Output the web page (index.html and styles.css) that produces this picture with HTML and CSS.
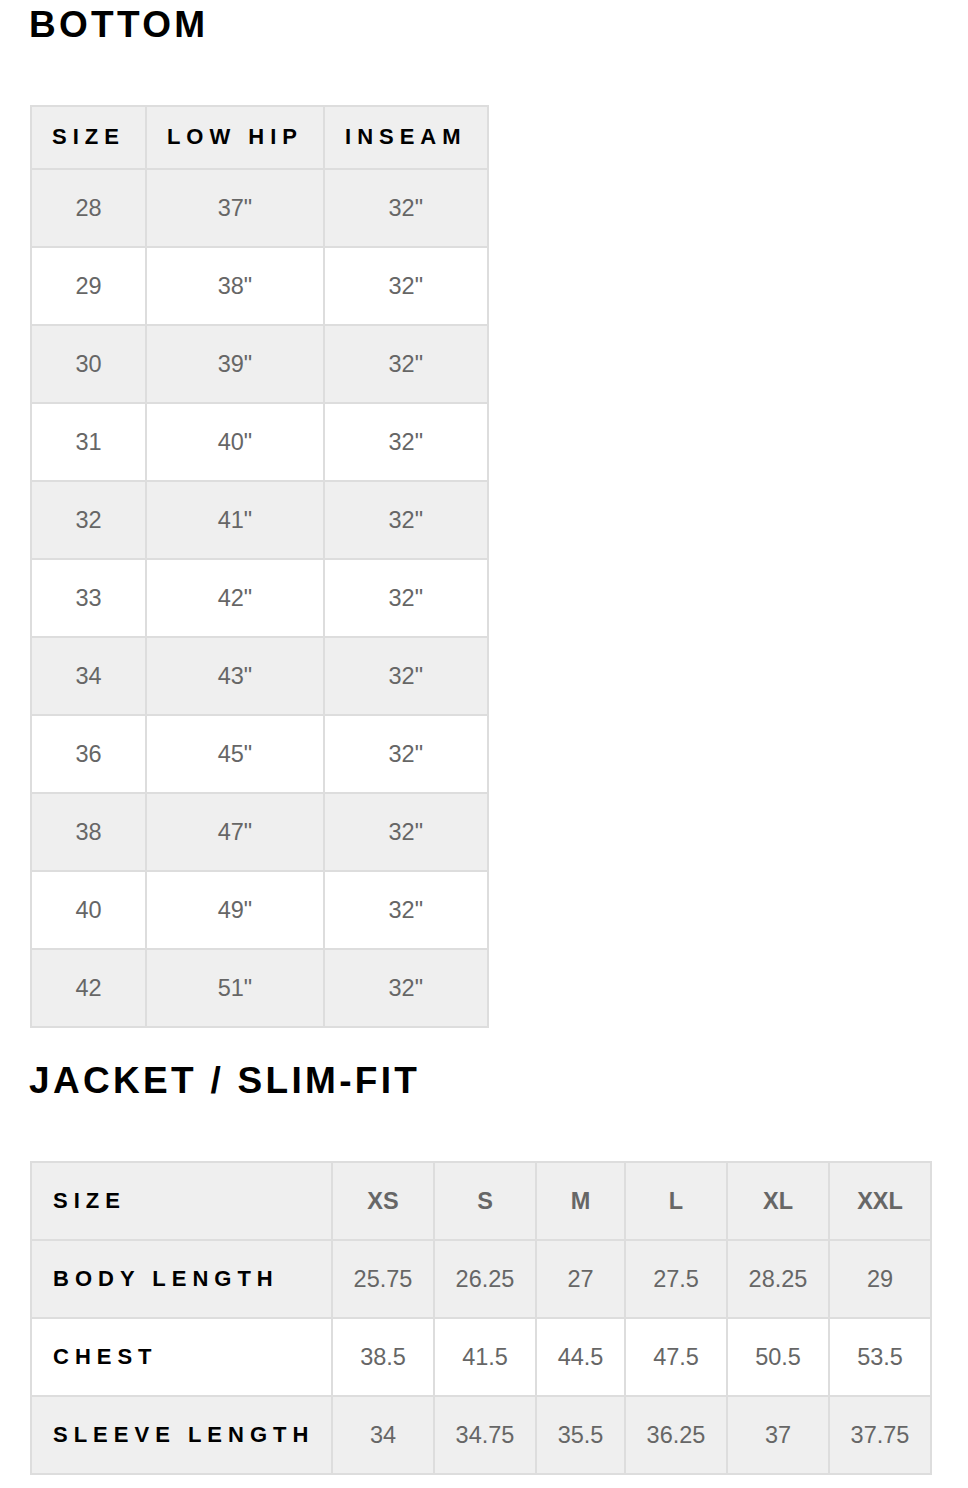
FILE: index.html
```html
<!DOCTYPE html>
<html lang="en">
<head>
<meta charset="utf-8">
<title>Size Chart</title>
<link rel="stylesheet" href="styles.css">
</head>
<body>
<main class="page">
  <section class="chart">
    <h2 class="chart-title">BOTTOM</h2>
    <table class="size-table bottom-table">
      <thead>
        <tr class="head-row"><th>SIZE</th><th>LOW HIP</th><th>INSEAM</th></tr>
      </thead>
      <tbody>
        <tr><td>28</td><td>37"</td><td>32"</td></tr>
        <tr><td>29</td><td>38"</td><td>32"</td></tr>
        <tr><td>30</td><td>39"</td><td>32"</td></tr>
        <tr><td>31</td><td>40"</td><td>32"</td></tr>
        <tr><td>32</td><td>41"</td><td>32"</td></tr>
        <tr><td>33</td><td>42"</td><td>32"</td></tr>
        <tr><td>34</td><td>43"</td><td>32"</td></tr>
        <tr><td>36</td><td>45"</td><td>32"</td></tr>
        <tr><td>38</td><td>47"</td><td>32"</td></tr>
        <tr><td>40</td><td>49"</td><td>32"</td></tr>
        <tr><td>42</td><td>51"</td><td>32"</td></tr>
      </tbody>
    </table>
  </section>
  <section class="chart">
    <h2 class="chart-title">JACKET / SLIM-FIT</h2>
    <table class="size-table jacket-table">
      <colgroup>
        <col class="col-label">
        <col class="col-wide">
        <col class="col-wide">
        <col class="col-narrow">
        <col class="col-wide">
        <col class="col-wide">
        <col class="col-wide">
      </colgroup>
      <thead>
        <tr class="head-row tall"><th class="label">SIZE</th><th class="size">XS</th><th class="size">S</th><th class="size">M</th><th class="size">L</th><th class="size">XL</th><th class="size">XXL</th></tr>
      </thead>
      <tbody>
        <tr><th class="label">BODY LENGTH</th><td>25.75</td><td>26.25</td><td>27</td><td>27.5</td><td>28.25</td><td>29</td></tr>
        <tr><th class="label">CHEST</th><td>38.5</td><td>41.5</td><td>44.5</td><td>47.5</td><td>50.5</td><td>53.5</td></tr>
        <tr><th class="label">SLEEVE LENGTH</th><td>34</td><td>34.75</td><td>35.5</td><td>36.25</td><td>37</td><td>37.75</td></tr>
      </tbody>
    </table>
  </section>
</main>
</body>
</html>
```
FILE: styles.css
```css
html, body {
  margin: 0;
  padding: 0;
  background: #ffffff;
}

body {
  font-family: "Liberation Sans", Arial, Helvetica, sans-serif;
  color: #000;
}

.page {
  padding: 6px 0 0 30px;
}

.chart-title {
  margin: 0 0 62px -1px;
  font-size: 37px;
  line-height: 37px;
  font-weight: 700;
  letter-spacing: 3.3px;
  color: #000;
}

.size-table {
  border-collapse: collapse;
  margin: 0 0 34px 0;
  font-size: 23.5px;
  line-height: 26px;
}

.size-table th,
.size-table td {
  border: 2px solid #dddddd;
  text-align: center;
  padding: 25px 20px;
  color: #666666;
  font-weight: 400;
  white-space: nowrap;
}

.size-table tbody tr:nth-child(odd) {
  background: #efefef;
}

.size-table tbody tr:nth-child(even) {
  background: #ffffff;
}

.head-row {
  background: #efefef;
}

.head-row th {
  padding: 17px 20px 18px;
  color: #000;
  font-size: 22px;
  font-weight: 700;
  letter-spacing: 6px;
}

.head-row.tall th {
  padding: 25px 20px;
}

.size-table th.label {
  text-align: left;
  color: #000;
  font-size: 22px;
  font-weight: 700;
  letter-spacing: 6px;
  padding-left: 21px;
  padding-right: 0;
}

.size-table th.size {
  color: #666666;
  font-size: 23.5px;
  letter-spacing: 0;
}

.jacket-table {
  table-layout: fixed;
  width: 902px;
}

.col-label { width: 301px; }
.col-wide { width: 102px; }
.col-narrow { width: 89px; }
```
